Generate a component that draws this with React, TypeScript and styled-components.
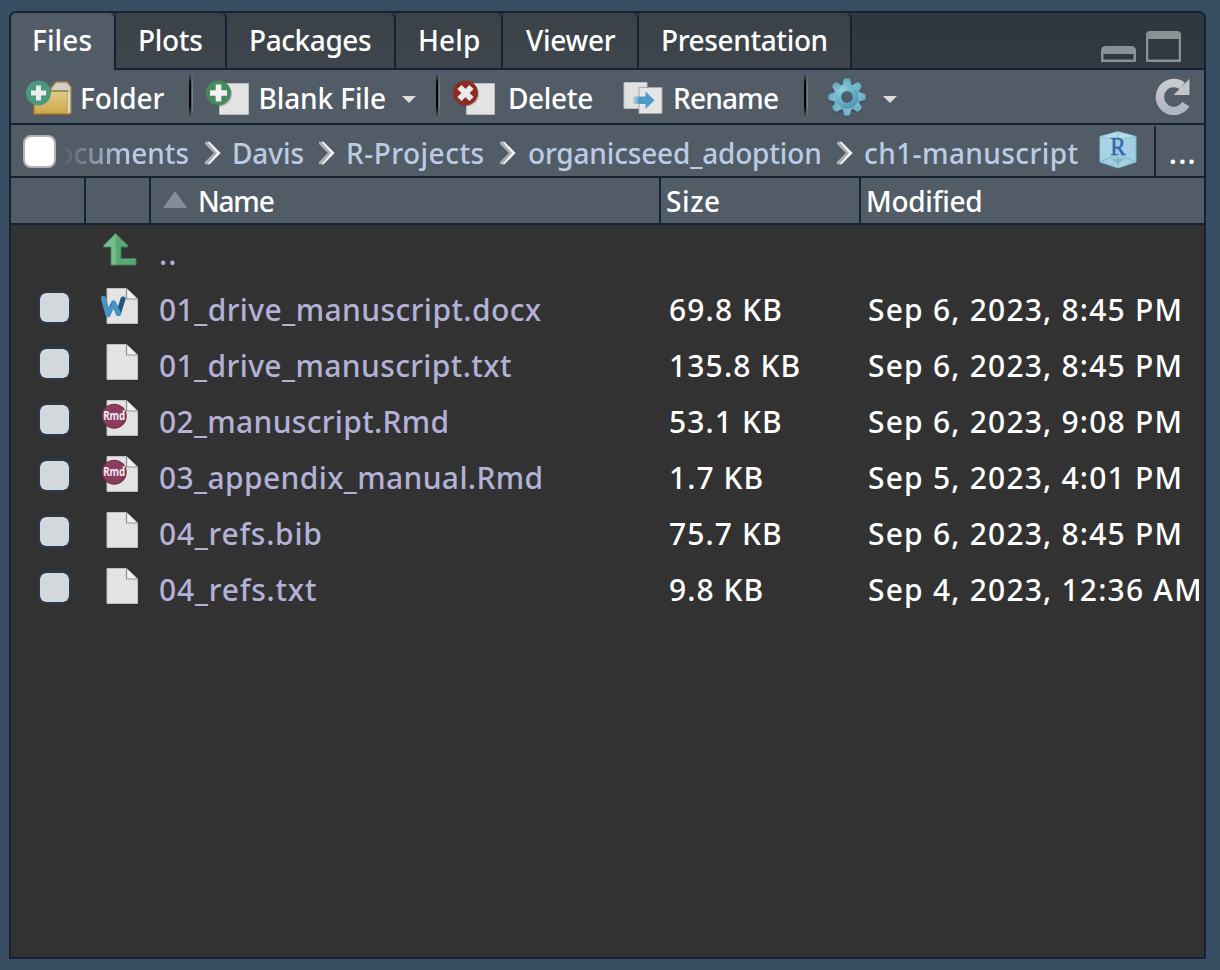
import React from 'react';
import styled, { createGlobalStyle } from 'styled-components';

const line = '#132334';
const surface = '#525c66';

const Global = createGlobalStyle`
  * { box-sizing: border-box; }
  html, body { margin: 0; height: 100%; background: #394d63; }
  body { font-family: "Noto Sans", "Open Sans", sans-serif; overflow: hidden; }
  svg { display: block; flex: none; }
`;

const Page = styled.div`
  width: 1220px;
  height: 970px;
  padding: 11px 14px 11px 9px;
  background: #394d63;
`;

const Pane = styled.section`
  width: 1197px;
  height: 948px;
  border: 2px solid ${line};
  border-radius: 7px 7px 0 0;
  background: #323232;
  display: flex;
  flex-direction: column;
  overflow: hidden;
  color: #fff;
  font-size: 28px;
  font-weight: 500;
  line-height: 38px;
  white-space: nowrap;
`;

const TabBar = styled.div`
  flex: none;
  height: 57px;
  display: flex;
  background: linear-gradient(${line}, ${line}) bottom / 100% 2px no-repeat,
    linear-gradient(#30373e, #32383f);
`;

const Tab = styled.div<{ $w: number; $pad?: number; $ls: number; $active?: boolean }>`
  flex: none;
  width: ${p => p.$w}px;
  height: ${p => (p.$active ? 57 : 55)}px;
  padding: 8px 0 0 ${p => p.$pad ?? 22}px;
  letter-spacing: ${p => p.$ls}px;
  border-right: 2px solid ${line};
  border-radius: 4px 6px 0 0;
  background: ${p => (p.$active ? surface : 'linear-gradient(#3a4147, #3e454c)')};
`;

const WindowButtons = styled.div`
  margin-left: auto;
  padding: 18px 23px 0 0;
  display: flex;
  align-items: flex-end;
  height: 49px;
  gap: 10px;
`;

const Toolbar = styled.div`
  flex: none;
  height: 55px;
  padding: 2px 14px 0 15px;
  display: flex;
  align-items: center;
  background: ${surface};
  border-bottom: 2px solid ${line};
`;

const ToolButton = styled.div<{ $w: number; $gap: number; $ls?: number }>`
  flex: none;
  width: ${p => p.$w}px;
  display: flex;
  align-items: center;
  gap: ${p => p.$gap}px;
  letter-spacing: ${p => p.$ls ?? 0}px;
`;

const Divider = styled.i<{ $after: number }>`
  flex: none;
  width: 4px;
  height: 43px;
  margin: 0 ${p => p.$after}px 4px 0;
  background:
    linear-gradient(transparent, #05080b 20%, #000 75%, transparent) 0 0 / 2px 100% no-repeat,
    linear-gradient(transparent, #78818a 30%, #78818a 70%, transparent) 3px 0 / 1px 100% no-repeat;
`;

const Caret = styled.i<{ $left: number }>`
  flex: none;
  margin: 3px 0 0 ${p => p.$left}px;
  border: 7px solid transparent;
  border-top: 7px solid #dcdcdc;
  border-bottom: 0;
`;

const Refresh = styled.div`
  margin: -2px 0 0 auto;
`;

const PathBar = styled.div`
  flex: none;
  height: 53px;
  display: flex;
  align-items: center;
  padding-left: 12px;
  background: ${surface};
  border-bottom: 2px solid ${line};
`;

const SelectAll = styled.span`
  flex: none;
  width: 33px;
  height: 33px;
  margin-top: 2px;
  background: #fff;
  border: 2px solid #b2b2b2;
  border-radius: 8px;
`;

const Crumb = styled.span<{ $w: number; $ls: number; $lead?: number }>`
  flex: none;
  width: ${p => p.$w}px;
  padding: 5px 0 0 ${p => p.$lead ?? 1}px;
  color: #bccbe4;
  letter-spacing: ${p => p.$ls}px;
`;

const ClippedCrumb = styled(Crumb)`
  display: flex;
  justify-content: flex-end;
  margin: 0 16px 0 8px;
  overflow: hidden;
  mask-image: linear-gradient(90deg, rgba(0, 0, 0, 0.05), #000 60px);
`;

const Separator = styled.span`
  flex: none;
  width: 26px;
  padding-top: 5px;
`;

const ProjectBadge = styled.span`
  flex: none;
  margin-bottom: 2px;
`;

const More = styled.span`
  flex: none;
  margin-left: 17px;
  width: 50px;
  height: 50px;
  padding: 8px 0 0 13px;
  align-self: flex-end;
  border-left: 2px solid ${line};
  font-weight: 600;
  letter-spacing: 1.7px;
`;

const HeaderRow = styled.div`
  flex: none;
  height: 47px;
  display: grid;
  grid-template-columns: 75px 65px 510px 200px 1fr;
  background: ${surface};
  border-bottom: 2px solid ${line};
`;

const HeaderCell = styled.div<{ $pad?: number; $ls?: number }>`
  display: flex;
  align-items: center;
  padding-left: ${p => p.$pad ?? 5}px;
  letter-spacing: ${p => (p.$ls ? `${p.$ls}px` : 'normal')};
  border-right: 2px solid ${line};
  &:last-child { border-right: 0; }
`;

const SortArrow = styled.i`
  border: 12px solid transparent;
  border-bottom: 17px solid #858b98;
  border-top: 0;
  margin: 0 11px 2px 0;
`;

const Row = styled.div`
  flex: none;
  height: 56px;
  display: grid;
  grid-template-columns: 75px 65px 510px 200px 1fr;
  font-size: 30px;
  line-height: 58px;
`;

const CheckCell = styled.div`
  padding: 10px 0 0 27px;
`;

const Check = styled.span`
  display: block;
  width: 33px;
  height: 33px;
  background: #d3d8dd;
  background-clip: padding-box;
  border: 2px solid #2b3a4b;
  border-radius: 8px;
`;

const IconCell = styled.div<{ $top?: number }>`
  padding: ${p => p.$top ?? 5}px 0 0 15px;
`;

const NameCell = styled.div<{ $ls: number }>`
  padding-left: 8px;
  color: #b3b1d6;
  letter-spacing: ${p => p.$ls}px;
`;

const SizeCell = styled.div<{ $ls: number }>`
  padding-left: 8px;
  letter-spacing: ${p => p.$ls}px;
`;

const DateCell = styled.div`
  margin-right: 5px;
  padding-left: 7px;
  overflow: hidden;
  height: 56px;
  letter-spacing: 1.2px;
`;

const FolderIcon = () => (
  <svg width="46" height="36" viewBox="0 0 46 36">
    <defs>
      <linearGradient id="fold" x1="0" y1="0" x2="0" y2="1">
        <stop offset="0" stopColor="#dccb87" />
        <stop offset="1" stopColor="#cfa74a" />
      </linearGradient>
    </defs>
    <path d="M25 11V8l5-6h11l4 5v26h-6z" fill="#cfcfcb" stroke="#a9833a" strokeWidth="1.3" />
    <path d="M8 11h34v23H8z" fill="url(#fold)" stroke="#a17a2c" strokeWidth="1.3" />
    <path d="M42.500 11.500v22" stroke="#e3e0d2" strokeWidth="1.600" />
    <circle cx="12.500" cy="13" r="12.500" fill="#4a9b7e" />
    <path d="M12.500 5.500v15M5 13h15" stroke="#ececec" strokeWidth="5" />
  </svg>
);

const NewFileIcon = () => (
  <svg width="44" height="36" viewBox="0 0 44 36">
    <path d="M13.500 3.500h29v31h-29z" fill="#e3e3e3" stroke="#b9bcbf" />
    <circle cx="13.500" cy="14" r="12.500" fill="#2c3a33" opacity=".25" />
    <circle cx="12.500" cy="13" r="12.500" fill="#458a5e" />
    <path d="M12.500 4.500v17M4 13h17" stroke="#f0f0f0" strokeWidth="5.600" />
  </svg>
);

const DeleteIcon = () => (
  <svg width="44" height="36" viewBox="0 0 44 36">
    <path d="M13.500 3.500h28v31h-28z" fill="#e3e3e3" stroke="#b9bcbf" />
    <circle cx="13.500" cy="14" r="12.500" fill="#3a2a28" opacity=".25" />
    <circle cx="12.500" cy="13" r="12.500" fill="#8d2c22" />
    <path d="M6.500 7l12 12M18.500 7l-12 12" stroke="#e9e9e9" strokeWidth="6" />
  </svg>
);

const RenameIcon = () => (
  <svg width="41" height="34" viewBox="0 0 41 34">
    <defs>
      <linearGradient id="arrow" x1="0" x2="1">
        <stop offset="0" stopColor="#4d9bcb" stopOpacity=".15" />
        <stop offset=".3" stopColor="#4d9bcb" />
      </linearGradient>
    </defs>
    <path d="M1 1.500h23v26H1z" fill="#e2e2e2" stroke="#bcbfc2" />
    <path d="M16 6.500h23v26H16z" fill="#e5e5e5" stroke="#a5a9ad" />
    <path d="M10 15.500h12.500v-5l9 8.800-9 8.700v-5H10z" fill="url(#arrow)" />
  </svg>
);

const teeth = [0, 45, 90, 135, 180, 225, 270, 315];
const GearIcon = () => (
  <svg width="40" height="42" viewBox="-20 -20 40 42">
    <defs>
      <radialGradient id="gear" gradientUnits="userSpaceOnUse" cx="-5" cy="-7" r="25">
        <stop offset="0" stopColor="#8fd0d8" />
        <stop offset="1" stopColor="#4489ad" />
      </radialGradient>
      <mask id="hub">
        <rect x="-20" y="-20" width="40" height="42" fill="#fff" />
        <circle r="5" fill="#000" />
      </mask>
    </defs>
    <g mask="url(#hub)" fill="#33485a" opacity=".55">
      <circle r="14" cy="1" />
      {teeth.map(a => <path key={a} d="M-5.500-11l2.300-6.500q3.200-2.600 6.400 0L5.500-11z" stroke="#33485a" transform={`translate(0 1) rotate(${a})`} />)}
    </g>
    <g mask="url(#hub)" fill="url(#gear)">
      <circle r="12.800" />
      {teeth.map(a => (
        <path key={a} d="M-5.400-11.500Q-3.600-13-3.600-16.500Q-3.200-18.800 0-18.800T3.600-16.500Q3.600-13 5.400-11.500z" transform={`rotate(${a})`} />
      ))}
    </g>
    <circle r="5.200" fill="none" stroke="#39677f" strokeWidth="1.400" />
  </svg>
);

const RefreshIcon = () => (
  <svg width="35" height="37" viewBox="0 0 35 37">
    <defs>
      <linearGradient id="spin" x1="0" y1="0" x2="0" y2="1">
        <stop offset="0" stopColor="#c9cacd" />
        <stop offset="1" stopColor="#b0b5c3" />
      </linearGradient>
    </defs>
    <path d="M26.500 7.500A14 14 0 1 0 30 26" fill="none" stroke="url(#spin)" strokeWidth="8.400" transform="translate(.8 .3)" />
    <path d="M34.500 .8V17H18.500z" fill="#c3c5cb" />
  </svg>
);

const MinimizeIcon = () => (
  <svg width="35" height="16" viewBox="0 0 35 16">
    <path fillRule="evenodd" fill="#8a9194" d="M0 16V5q0-5 5-5h25q5 0 5 5v11zM2.500 8v5.500h30V8z" />
  </svg>
);

const MaximizeIcon = () => (
  <svg width="35" height="31" viewBox="0 0 35 31">
    <path fillRule="evenodd" fill="#8a9194" d="M0 31V4q0-4 4-4h27q4 0 4 4v27zM2.300 8v20.500h30.400V8z" />
  </svg>
);

const ChevronIcon = () => (
  <svg width="16" height="24" viewBox="0 0 16 24">
    <path d="M0 .8h4.500L15.500 12 4.500 23.200H0V21l8.800-9L0 3z" fill="#aeafb1" />
    <path d="M2.500 .8h2L15.500 12 4.500 23.200h-2L12 12z" fill="#f3f3f3" />
  </svg>
);

const ProjectIcon = () => (
  <svg width="38" height="38" viewBox="0 0 38 38">
    <path d="M19 .8l18 4.700v25.500L19 37 1 31V5.500z" fill="#a5cee2" stroke="#75bed0" />
    <path d="M19 .8l18 4.700L19 10 1 5.500z" fill="#b8dbe8" />
    <path d="M19 24L1 31V5.500L19 10z" fill="#a9d5e3" opacity=".7" />
    <path d="M19 1v36M1 31l18-8 18 8M1 5.500L19 9l18-3.500" stroke="#66bfc9" fill="none" opacity=".8" />
    <path d="M12 28l14-1-7 6z" fill="#78afc4" opacity=".7" />
    <text x="19" y="24" textAnchor="middle" fontFamily="Liberation Serif, serif" fontSize="26" fontWeight="400" textLength="15.500" lengthAdjust="spacingAndGlyphs" fill="#3863ae" stroke="#3863ae" strokeWidth=".5">R</text>
  </svg>
);

const UpIcon = () => (
  <svg width="37" height="36" viewBox="0 0 37 36">
    <path d="M14.500 1.500L27 13.500v1.500h-7v11.500h15V33H10V15H2.500v-1.500z" fill="#5aa873" stroke="#3f7f55" strokeWidth="1" />
    <path d="M14.500 2L3.500 13.500V14.500h7V32.500h4.500z" fill="#74be8c" />
  </svg>
);

type Kind = 'word' | 'plain' | 'rmd';

const FileIcon = ({ kind }: { kind: Kind }) => (
  <svg width="38" height="40" viewBox="1 0 38 40">
    <path d="M6.500 2.500h20L38 13v25.500H6.500z" fill="#222" />
    <path d="M7 2.500h19.500L37.500 13v24.500H7z" fill="#e4e4e4" stroke="#c0c1c2" />
    <path d="M26.500 2.500V13h11" fill="#f0f0f0" stroke="#8f9092" strokeWidth="1.200" />
    {kind === 'word' && (
      <g fill="none" strokeLinecap="round" strokeLinejoin="round">
        <polyline points="8,28.200 13.500,17 18.500,27.500" stroke="#2b6592" strokeWidth="5" />
        <polyline points="18.500,27.500 23,13" stroke="#24577d" strokeWidth="5" />
        <polyline points="3.500,12.500 8,28.500" stroke="#4794c4" strokeWidth="5.200" />
        <polyline points="13.500,17 18.500,27.500" stroke="#4794c4" strokeWidth="5" />
        <polyline points="8,28.500 11,22" stroke="#4794c4" strokeWidth="5" />
      </g>
    )}
    {kind === 'rmd' && (
      <g>
        <circle cx="14.200" cy="18.200" r="12.500" fill="#6d2f47" />
        <circle cx="14.200" cy="17.800" r="11.500" fill="#8a3d5d" />
        <text x="3.200" y="21.500" fontFamily="Noto Sans, sans-serif" fontSize="11.500" fontWeight="700" textLength="22" lengthAdjust="spacingAndGlyphs" fill="#f4eaf0">Rmd</text>
      </g>
    )}
  </svg>
);

const files: { kind: Kind; name: string; ls: number; size: string; sls: number; date: string }[] = [
  { kind: 'word', name: '01_drive_manuscript.docx', ls: 0.43, size: '69.8 KB', sls: 1.15, date: 'Sep 6, 2023, 8:45 PM' },
  { kind: 'plain', name: '01_drive_manuscript.txt', ls: 0.4, size: '135.8 KB', sls: 1.15, date: 'Sep 6, 2023, 8:45 PM' },
  { kind: 'rmd', name: '02_manuscript.Rmd', ls: 0.33, size: '53.1 KB', sls: 1.1, date: 'Sep 6, 2023, 9:08 PM' },
  { kind: 'rmd', name: '03_appendix_manual.Rmd', ls: 0.37, size: '1.7 KB', sls: 1.05, date: 'Sep 5, 2023, 4:01 PM' },
  { kind: 'plain', name: '04_refs.bib', ls: 0.75, size: '75.7 KB', sls: 1.1, date: 'Sep 6, 2023, 8:45 PM' },
  { kind: 'plain', name: '04_refs.txt', ls: 0.8, size: '9.8 KB', sls: 1.05, date: 'Sep 4, 2023, 12:36 AM' },
];

const Chevron = () => <Separator><ChevronIcon /></Separator>;

export default function App() {
  return (
    <Page>
      <Global />
      <Pane>
        <TabBar>
          <Tab $w={105} $pad={21} $ls={0.1} $active>Files</Tab>
          <Tab $w={111} $ls={-0.3}>Plots</Tab>
          <Tab $w={169} $ls={-0.42}>Packages</Tab>
          <Tab $w={107} $ls={0.1}>Help</Tab>
          <Tab $w={136} $pad={23} $ls={-0.25}>Viewer</Tab>
          <Tab $w={213} $ls={-0.38}>Presentation</Tab>
          <WindowButtons>
            <MinimizeIcon />
            <MaximizeIcon />
          </WindowButtons>
        </TabBar>
        <Toolbar>
          <ToolButton $w={163} $gap={8} $ls={-0.1}><FolderIcon />Folder</ToolButton>
          <Divider $after={13} />
          <ToolButton $w={230} $gap={8.500} $ls={-0.1}><NewFileIcon />Blank File<Caret $left={8} /></ToolButton>
          <Divider $after={13} />
          <ToolButton $w={170} $gap={11} $ls={-0.35}><DeleteIcon />Delete</ToolButton>
          <ToolButton $w={181} $gap={9} $ls={-0.75}><RenameIcon />Rename</ToolButton>
          <Divider $after={19} />
          <ToolButton $w={72} $gap={8}><GearIcon /><Caret $left={8} /></ToolButton>
          <Refresh><RefreshIcon /></Refresh>
        </Toolbar>
        <PathBar>
          <SelectAll />
          <ClippedCrumb $w={125} $ls={-0.05}>Documents</ClippedCrumb>
          <Chevron />
          <Crumb $w={88} $ls={-0.1}>Davis</Crumb>
          <Chevron />
          <Crumb $w={155} $ls={0.48}>R-Projects</Crumb>
          <Chevron />
          <Crumb $w={311} $lead={2} $ls={-0.17}>organicseed_adoption</Crumb>
          <Chevron />
          <Crumb $w={236} $lead={1} $ls={0.42}>ch1-manuscript</Crumb>
          <ProjectBadge><ProjectIcon /></ProjectBadge>
          <More>...</More>
        </PathBar>
        <HeaderRow>
          <HeaderCell />
          <HeaderCell />
          <HeaderCell $pad={12} $ls={-1.2}><SortArrow />Name</HeaderCell>
          <HeaderCell $ls={0.6}>Size</HeaderCell>
          <HeaderCell $ls={-0.3}>Modified</HeaderCell>
        </HeaderRow>
        <Row>
          <span />
          <IconCell $top={7}><UpIcon /></IconCell>
          <NameCell $ls={1.2}>..</NameCell>
        </Row>
        {files.map(f => (
          <Row key={f.name}>
            <CheckCell><Check /></CheckCell>
            <IconCell><FileIcon kind={f.kind} /></IconCell>
            <NameCell $ls={f.ls}>{f.name}</NameCell>
            <SizeCell $ls={f.sls}>{f.size}</SizeCell>
            <DateCell>{f.date}</DateCell>
          </Row>
        ))}
      </Pane>
    </Page>
  );
}
